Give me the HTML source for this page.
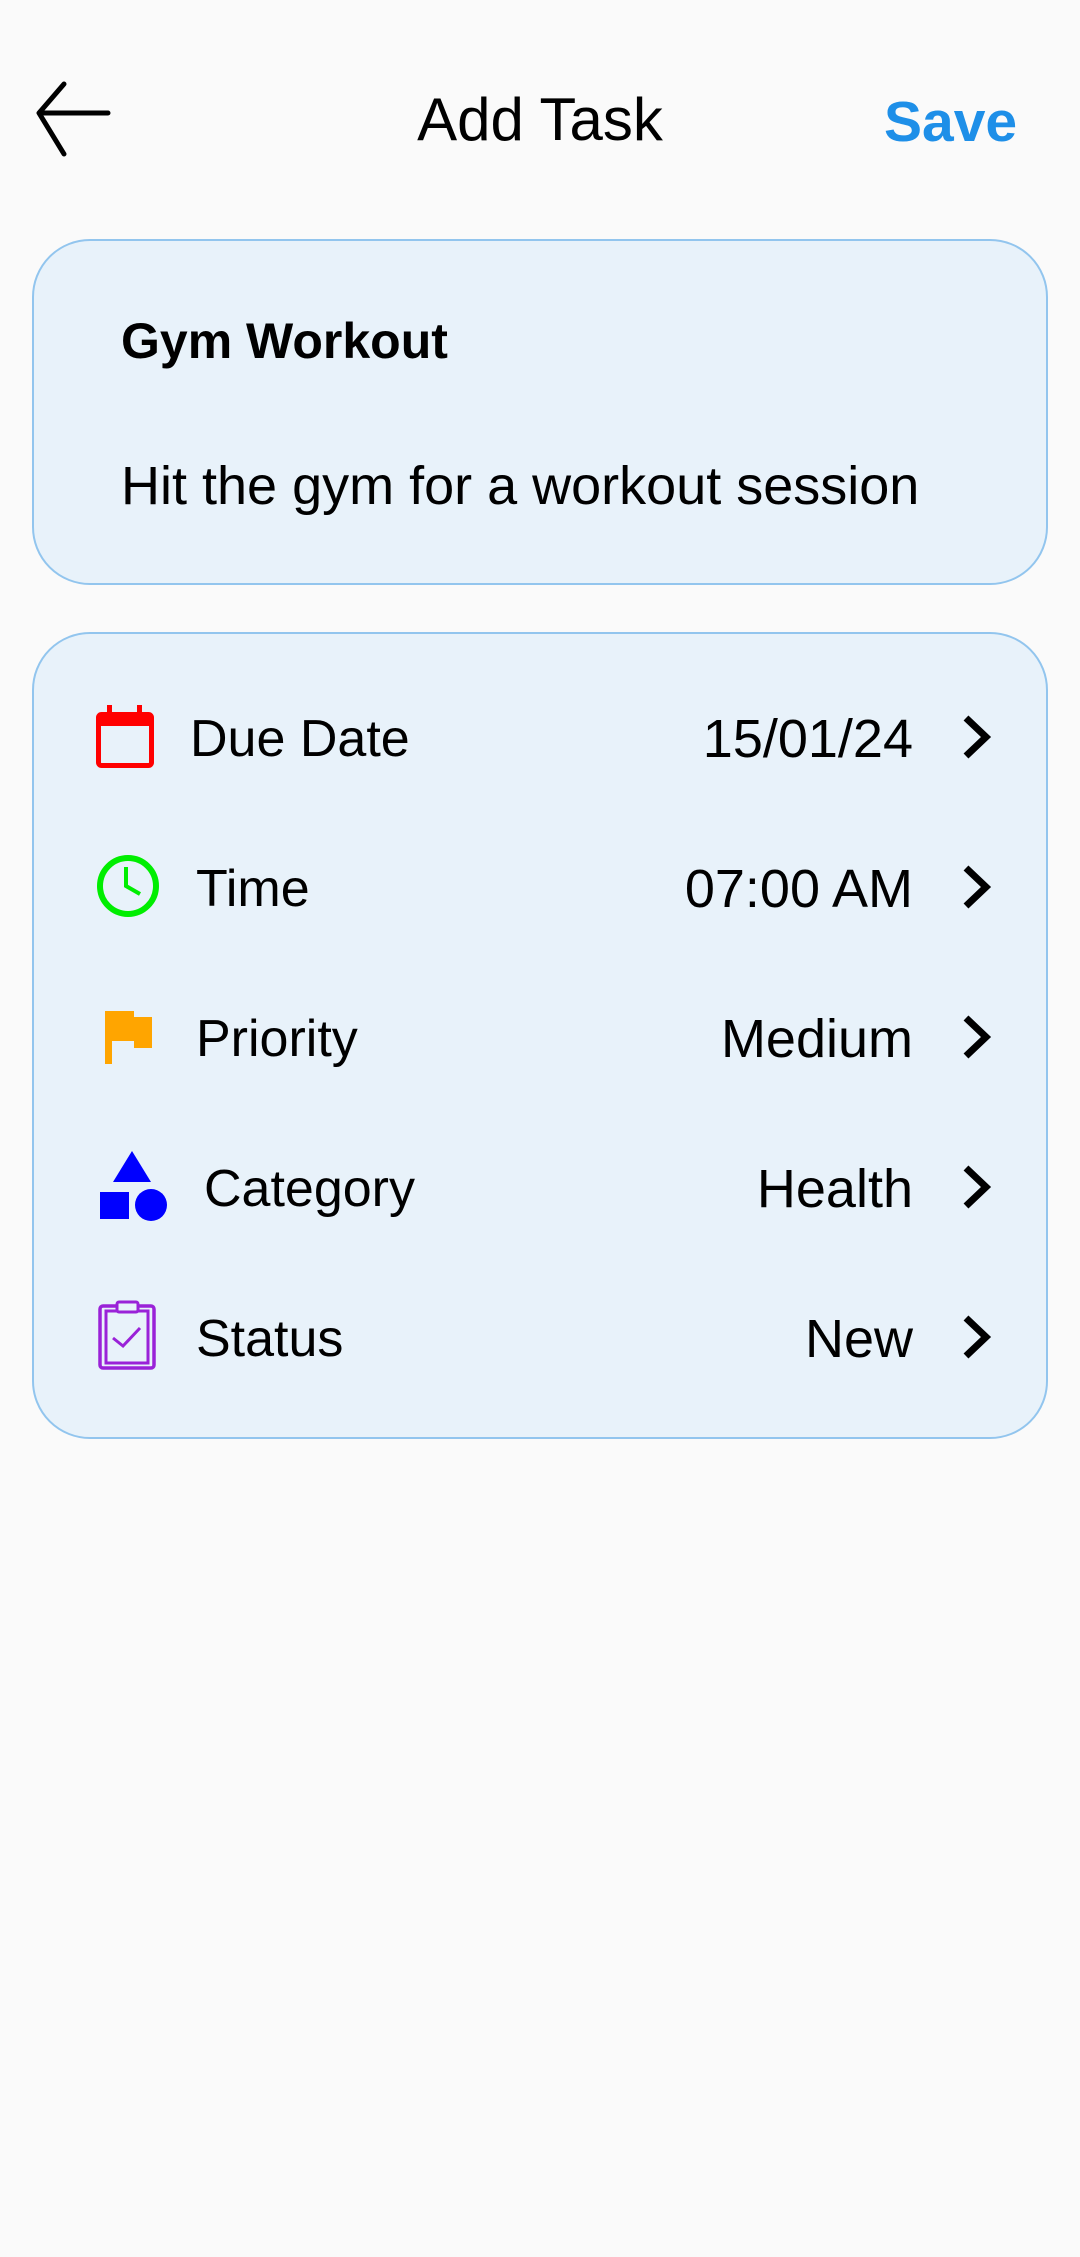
<!DOCTYPE html>
<html><head><meta charset="utf-8"><style>
*{margin:0;padding:0;box-sizing:border-box}
body{width:1080px;height:2257px;background:#fafafa;font-family:"Liberation Sans",Roboto,sans-serif;position:relative;overflow:hidden;color:#000}
.a{position:absolute;white-space:nowrap}
.card{position:absolute;left:32px;width:1016px;background:#e8f2fa;border:2px solid #92c5ee;border-radius:58px}
.lbl{position:absolute;font-size:52px;line-height:1}
.val{position:absolute;right:167px;font-size:54px;line-height:1;text-align:right}
</style></head><body>
<svg class="a" style="left:30px;top:78px" width="90" height="80" viewBox="0 0 90 80"><path d="M78 35H10M34 6L9 35L34 76" fill="none" stroke="#000" stroke-width="5" stroke-linecap="round" stroke-linejoin="round"/></svg>
<div class="a" style="left:0;width:1080px;text-align:center;top:86px;font-size:60px;line-height:68px">Add Task</div>
<div class="a" style="left:884px;top:88px;font-size:57px;line-height:68px;font-weight:bold;color:#1e8fe8">Save</div>

<div class="card" style="top:239px;height:346px"></div>
<div class="a" style="left:121px;top:316px;font-size:50px;font-weight:bold;line-height:50px">Gym Workout</div>
<div class="a" style="left:121px;top:459px;font-size:54px;line-height:54px">Hit the gym for a workout session</div>

<div class="card" style="top:632px;height:807px"></div>

<svg class="a" style="left:0;top:0" width="1080" height="1500" viewBox="0 0 1080 1500">
<rect x="98.5" y="714.5" width="53" height="51" rx="3" fill="none" stroke="#f00" stroke-width="5"/><rect x="98" y="714" width="54" height="12" fill="#f00"/><rect x="107" y="705" width="5" height="12" fill="#f00"/><rect x="137" y="705" width="5" height="12" fill="#f00"/>
<circle cx="128" cy="886" r="28" fill="none" stroke="#0e0" stroke-width="6"/><path d="M126 867V886L140 894" fill="none" stroke="#0e0" stroke-width="4"/>
<path d="M105 1011H134V1017H152V1048H134V1041H112V1064H105Z" fill="#ffa500"/>
<path d="M132 1151L151 1182H113Z" fill="#00f"/><rect x="100" y="1192" width="29" height="27" fill="#00f"/><ellipse cx="151" cy="1205" rx="16" ry="16" fill="#00f"/>
<rect x="100" y="1306" width="54" height="62" rx="3" fill="none" stroke="#9a22d8" stroke-width="3.5"/><rect x="106" y="1311" width="42" height="52" fill="none" stroke="#9a22d8" stroke-width="3"/><rect x="117" y="1302" width="21" height="10" rx="2" fill="#e8f2fa" stroke="#9a22d8" stroke-width="3"/><path d="M113 1338L123 1346L140 1328" fill="none" stroke="#9a22d8" stroke-width="3"/>
</svg>

<div class="lbl" style="left:190px;top:713px">Due Date</div>
<div class="lbl" style="left:196px;top:863px">Time</div>
<div class="lbl" style="left:196px;top:1013px">Priority</div>
<div class="lbl" style="left:204px;top:1163px">Category</div>
<div class="lbl" style="left:196px;top:1313px">Status</div>

<div class="val" style="top:712px">15/01/24</div>
<div class="val" style="top:862px">07:00 AM</div>
<div class="val" style="top:1012px">Medium</div>
<div class="val" style="top:1162px">Health</div>
<div class="val" style="top:1312px">New</div>

<svg class="a" style="left:960px;top:714px" width="34" height="46" viewBox="0 0 34 46"><path d="M6 4L26 23L6 42" fill="none" stroke="#000" stroke-width="7"/></svg>
<svg class="a" style="left:960px;top:864px" width="34" height="46" viewBox="0 0 34 46"><path d="M6 4L26 23L6 42" fill="none" stroke="#000" stroke-width="7"/></svg>
<svg class="a" style="left:960px;top:1014px" width="34" height="46" viewBox="0 0 34 46"><path d="M6 4L26 23L6 42" fill="none" stroke="#000" stroke-width="7"/></svg>
<svg class="a" style="left:960px;top:1164px" width="34" height="46" viewBox="0 0 34 46"><path d="M6 4L26 23L6 42" fill="none" stroke="#000" stroke-width="7"/></svg>
<svg class="a" style="left:960px;top:1314px" width="34" height="46" viewBox="0 0 34 46"><path d="M6 4L26 23L6 42" fill="none" stroke="#000" stroke-width="7"/></svg>
</body></html>
